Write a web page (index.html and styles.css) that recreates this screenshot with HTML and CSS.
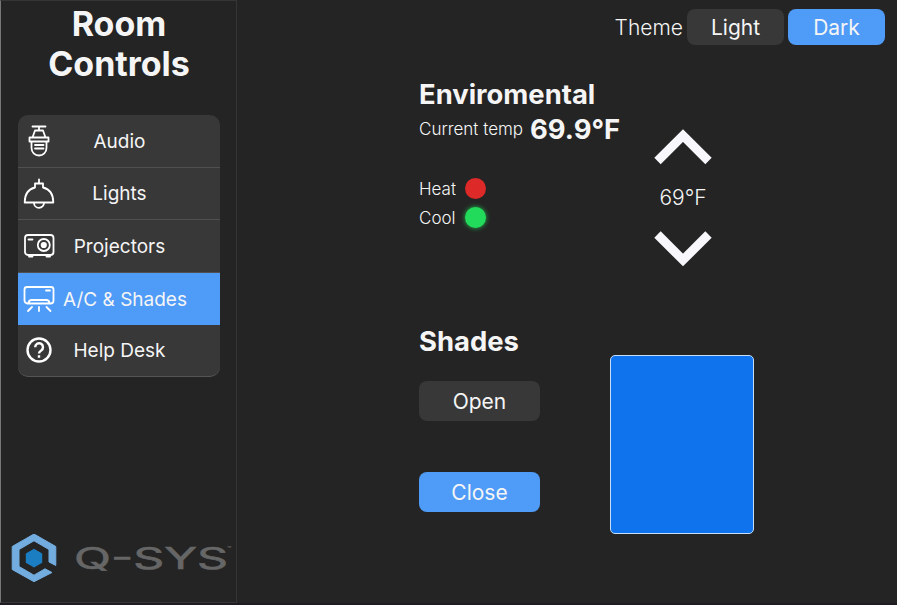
FILE: index.html
```html
<!DOCTYPE html>
<html lang="en">
<head>
<meta charset="utf-8">
<title>Room Controls</title>
<link rel="stylesheet" href="styles.css">
</head>
<body>
<div class="app">
  <aside class="sidebar">
    <h1 class="title">Room<br>Controls</h1>
    <nav class="nav">
      <a class="nav-item">
        <svg class="icon" viewBox="0 0 32 32"><path d="M9.500 1.500h13M16 1.500v4M12 5.500h8l2.500 7h-13zM6.500 12.500h19v4h-19zM8.500 16.500v6.500a7.500 7.500 0 0 0 15 0v-6.500M12 20h8.500M12 23.500h8.500"/></svg>
        <span>Audio</span>
      </a>
      <a class="nav-item">
        <svg class="icon" viewBox="0 0 32 32"><path d="M16 1.500v4M12 5.500h8v4c6.500 1.500 10.300 7 10.300 15h-28.600C1.700 16.500 5.500 11 12 9.500zM11 25a5 4.800 0 0 0 10 0"/></svg>
        <span class="level">Lights</span>
      </a>
      <a class="nav-item">
        <svg class="icon" viewBox="0 0 32 32"><rect x="2" y="5" width="28.500" height="20" rx="3"/><circle cx="20.800" cy="15" r="6"/><circle class="solid" cx="20.800" cy="15" r="2.200"/><path d="M5.500 9.500h4M6 26.500h3.500M23.500 26.500h3.500"/></svg>
        <span>Projectors</span>
      </a>
      <a class="nav-item active">
        <svg class="icon" viewBox="0 0 32 32"><path d="M4 4h24a2.500 2.500 0 0 1 2.500 2.500v11a3 3 0 0 1-3 3H4.500a3 3 0 0 1-3-3v-11A2.500 2.500 0 0 1 4 4zM5.500 20q.5-3 3-3h15q2.500 0 3 3M23 7.500h4M9 24l-4 4M16 24v4M23.500 24l4 4"/></svg>
        <span class="wide">A/C &amp; Shades</span>
      </a>
      <a class="nav-item help">
        <svg class="icon" viewBox="0 0 32 32"><g class="heavy"><circle cx="16" cy="16" r="11.500"/><path d="M12.200 13.200a3.900 3.900 0 1 1 6 3.200c-1.500 1-2.200 1.700-2.200 3.200M16 21.200v2.500"/></g></svg>
        <span>Help Desk</span>
      </a>
    </nav>
    <svg class="brand" viewBox="0 0 224 52">
      <path class="ring" d="M23 0L44.800 12.500V31.500L38 28V15.500L23 6.800 8 15.500V32.500L23 41.200 34 34.800 41 38.500 23 47.700 1.200 35.500V12.500z"/>
      <path class="core" d="M23 14.800l8.200 4.700v9.300L23 33.500 14.800 28.800v-9.300z"/>
      <text class="word" x="63" y="34.500" textLength="154" lengthAdjust="spacingAndGlyphs">Q-SYS</text>
      <text class="tm" x="216" y="18">™</text>
    </svg>
  </aside>
  <main class="main">
    <header class="theme">
      <span>Theme</span>
      <button class="btn">Light</button>
      <button class="btn on">Dark</button>
    </header>
    <section class="environment">
      <div class="readings">
        <h2>Enviromental</h2>
        <p class="current"><span>Current temp</span><strong>69.9°F</strong></p>
        <p class="state heat"><span>Heat</span><i class="led red"></i></p>
        <p class="state"><span>Cool</span><i class="led green"></i></p>
      </div>
      <div class="stepper">
        <svg viewBox="0 0 58 36"><path d="M3.500 32L29 6.500 54.500 32"/></svg>
        <span>69°F</span>
        <svg viewBox="0 0 58 36"><path d="M3.500 3.500L29 29 54.500 3.500"/></svg>
      </div>
    </section>
    <section class="shades">
      <div class="shade-actions">
        <h2>Shades</h2>
        <button class="btn">Open</button>
        <button class="btn on">Close</button>
      </div>
      <div class="shade"></div>
    </section>
  </main>
</div>
</body>
</html>
```
FILE: styles.css
```css
* { box-sizing: border-box; margin: 0; padding: 0; }
body { background: #201b23; color: #f5f5f5; font-family: Inter, sans-serif; overflow: hidden; }
.app { display: flex; width: 897px; height: 603px; background: #242424; }
.sidebar { width: 237px; border: 1px solid #353535; border-left-color: #777; padding: 3px 0 0 0; display: flex; flex-direction: column; }
.title { font-size: 34px; line-height: 40px; font-weight: 700; text-align: center; padding-left: 1px; }
.nav { margin: 31px 16px 0 17px; height: 262px; border-radius: 10px; overflow: hidden; background: #383838; display: grid; grid-template-rows: 53px 52px 53px 52px 52px; border-bottom: 1px solid #555; }
.nav-item { display: grid; align-items: center; border-bottom: 1px solid #505050; font-size: 19px; line-height: 24px; }
.nav-item > * { grid-area: 1 / 1; }
.nav-item span { justify-self: center; padding: 2px 0 0 1px; }
.nav-item .level { padding-top: 0; }
.nav-item .wide { padding-left: 12px; }
.nav-item.help { border: 0; padding-bottom: 2px; }
.active { background: #4f9bf8; border-color: #4f9bf8; }
.icon { width: 32px; height: 32px; margin-left: 5px; fill: none; stroke: #fff; stroke-width: 1.8; stroke-linejoin: round; stroke-linecap: round; }
.solid { fill: #fff; }
.heavy { stroke-width: 2.4; stroke-linecap: butt; }
.brand { width: 224px; height: 52px; margin: auto 0 16px 10px; }
.ring { fill: #73ade0; stroke: #73ade0; stroke-width: 1; stroke-linejoin: round; }
.core { fill: #1b7dc2; }
.word { font: 400 30px Inter, sans-serif; fill: #666; stroke: #666; stroke-width: .6; }
.tm { font: 7px Inter, sans-serif; fill: #777; }
.main { flex: 1; padding: 9px 12px 0 182px; }
.theme { display: flex; justify-content: flex-end; align-items: center; gap: 4px; font-size: 21px; font-weight: 300; }
.btn { border: 0; border-radius: 8px; background: #383838; color: #f5f5f5; font: 400 21px Inter, sans-serif; width: 97px; height: 36px; }
.on { background: #4f9bf8; }
h2 { font-size: 27.4px; line-height: 34px; font-weight: 700; }
.environment { display: flex; height: 247px; padding-top: 32px; }
.readings { width: 235px; }
.current { display: flex; align-items: center; gap: 7px; height: 35px; font-size: 17px; font-weight: 300; line-height: 34px; white-space: nowrap; }
.current strong { font-size: 27.4px; font-weight: 700; }
.state { display: flex; align-items: center; height: 29px; font-size: 17px; font-weight: 300; }
.state span { width: 46px; }
.heat { margin-top: 28px; }
.led { width: 21px; height: 21px; border-radius: 50%; }
.red { background: #de2929; }
.green { background: #22db5b; box-shadow: 0 0 5px #22b84e; }
.stepper { display: flex; flex-direction: column; align-items: center; width: 58px; padding-top: 52px; font-size: 21px; font-weight: 300; line-height: 26px; gap: 20px; }
.stepper svg { width: 58px; height: 36px; fill: none; stroke: #f8f7fc; stroke-width: 9; flex: none; }
.shades { display: flex; padding-top: 32px; }
.shade-actions { width: 191px; display: flex; flex-direction: column; }
.shade-actions .btn { width: 121px; height: 40px; margin-top: 23px; }
.shade-actions .on { margin-top: 51px; }
.shade { width: 144px; height: 179px; margin-top: 31px; border: 1px solid #c7def8; border-radius: 5px; background: #0e73ed; }
```
